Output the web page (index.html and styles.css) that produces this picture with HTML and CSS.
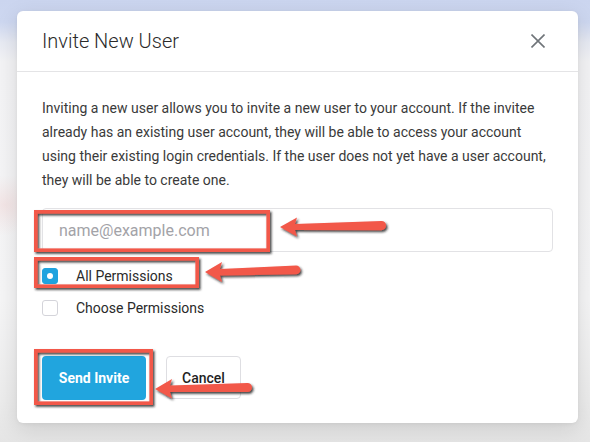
FILE: index.html
```html
<!DOCTYPE html>
<html>
<head>
<meta charset="utf-8">
<link rel="stylesheet" href="styles.css">
</head>
<body>
<div class="page">
  <div class="modal">
    <div class="modal-header">
      <h1 class="modal-title">Invite New User</h1>
      <button class="close-btn" aria-label="Close">
        <svg width="14" height="14" viewBox="0 0 14 14"><path d="M0.5 0.5 L13.5 13.5 M13.5 0.5 L0.5 13.5" stroke="#6f7479" stroke-width="1.6" fill="none"/></svg>
      </button>
    </div>
    <div class="modal-body">
      <p class="intro">Inviting a new user allows you to invite a new user to your account. If the invitee already has an existing user account, they will be able to access your account using their existing login credentials. If the user does not yet have a user account, they will be able to create one.</p>
      <input class="email-input" type="text" placeholder="name@example.com">
      <div class="option-row">
        <span class="check checked"><span class="dot"></span></span>
        <span class="option-label">All Permissions</span>
      </div>
      <div class="option-row">
        <span class="check"></span>
        <span class="option-label">Choose Permissions</span>
      </div>
      <div class="actions">
        <button class="btn btn-primary">Send Invite</button>
        <button class="btn btn-default">Cancel</button>
      </div>
    </div>
  </div>
</div>
<svg class="annotations" width="590" height="442" viewBox="0 0 590 442">
  <defs>
    <filter id="sh" x="-20%" y="-50%" width="140%" height="200%">
      <feDropShadow dx="1.5" dy="1.8" stdDeviation="0.9" flood-color="#222" flood-opacity="0.85"/>
    </filter>
  </defs>
  <g filter="url(#sh)" fill="none" stroke="#f2584a" stroke-width="3.6">
    <rect x="35.8" y="211.8" width="232.4" height="38.4"/>
    <rect x="35.8" y="258.8" width="161.4" height="27.4"/>
    <rect x="35.8" y="350.8" width="115.4" height="52.4"/>
  </g>
  <g filter="url(#sh)" fill="#f2584a">
    <path d="M280 227 L297 217.5 L295 224 L381.5 221 A4.6 4.6 0 0 1 381.5 230.2 L295 230 L297 236.5 Z"/>
    <path d="M205 272 L222 262 L220 269 L296 265.5 A4.4 4.4 0 0 1 296 274.3 L220 275.5 L222 282 Z"/>
    <path d="M155 389 L172 379 L170 385.5 L247.5 383 A4.5 4.5 0 0 1 247.5 392 L170 392 L172 398.5 Z"/>
  </g>
</svg>
</body>
</html>
```

FILE: styles.css
```css
* { box-sizing: border-box; }

html, body {
  margin: 0;
  padding: 0;
}

body {
  width: 590px;
  height: 442px;
  overflow: hidden;
  font-family: Roboto, "Liberation Sans", Arial, sans-serif;
  background:
    radial-gradient(ellipse 40px 30px at 5px 205px, rgba(240, 200, 200, 0.35), rgba(240, 200, 200, 0) 100%),
    linear-gradient(180deg, #cbd5ef 0px, #cdd7f0 22px, #e7eaf3 42px, #f3f3f5 62px, #f5f5f6 300px, #ececec 400px, #e5e5e5 442px);
  position: relative;
}

.page {
  padding: 11px 12px 0 17px;
}

.modal {
  width: 561px;
  height: 412px;
  background: #ffffff;
  border-radius: 6px;
  box-shadow: 0 6px 22px rgba(0, 0, 0, 0.12), 0 1px 4px rgba(0, 0, 0, 0.05);
  display: flex;
  flex-direction: column;
}

.modal-header {
  height: 61px;
  padding: 0 25px;
  border-bottom: 1px solid #e4e4e6;
  display: flex;
  align-items: center;
  justify-content: space-between;
}

.modal-title {
  margin: 0;
  font-size: 20px;
  font-weight: 300;
  color: #2a2a2a;
  letter-spacing: 0;
}

.close-btn {
  width: 30px;
  height: 30px;
  padding: 0;
  border: 0;
  background: transparent;
  display: flex;
  align-items: center;
  justify-content: center;
  margin-right: 0;
}

.modal-body {
  padding: 24px 25px 23px;
  display: flex;
  flex-direction: column;
}

.intro {
  margin: 0;
  font-size: 14px;
  line-height: 24px;
  color: #3a3a3a;
}

.email-input {
  margin-top: 16px;
  height: 44px;
  width: 100%;
  border: 1px solid #e2e2e5;
  border-radius: 4px;
  padding: 0 16px;
  font-family: Roboto, "Liberation Sans", Arial, sans-serif;
  font-size: 16px;
  color: #333;
  outline: none;
}

.email-input::placeholder {
  color: #a3a3a8;
}

.option-row {
  height: 32px;
  display: flex;
  align-items: center;
  gap: 18px;
}

.email-input + .option-row {
  margin-top: 8px;
}

.check {
  width: 16px;
  height: 16px;
  border-radius: 3px;
  border: 1.5px solid #d4d4da;
  background: #fff;
  display: flex;
  align-items: center;
  justify-content: center;
}

.check.checked {
  background: #1fa3df;
  border-color: #1fa3df;
}

.dot {
  width: 6px;
  height: 6px;
  border-radius: 50%;
  background: #fff;
}

.option-label {
  font-size: 14px;
  color: #2a2a2a;
}

.actions {
  margin-top: 32px;
  display: flex;
  gap: 20px;
  align-items: flex-start;
}

.btn {
  font-family: Roboto, "Liberation Sans", Arial, sans-serif;
  font-size: 14px;
  border-radius: 4px;
  cursor: pointer;
}

.btn-primary {
  width: 104px;
  height: 44px;
  background: #21a5de;
  border: 0;
  color: #fff;
  font-weight: 700;
}

.btn-default {
  width: 75px;
  height: 43px;
  background: #fff;
  border: 1px solid #dedee2;
  color: #1f1f1f;
  font-weight: 500;
}

.annotations {
  position: absolute;
  left: 0;
  top: 0;
  pointer-events: none;
}
```
